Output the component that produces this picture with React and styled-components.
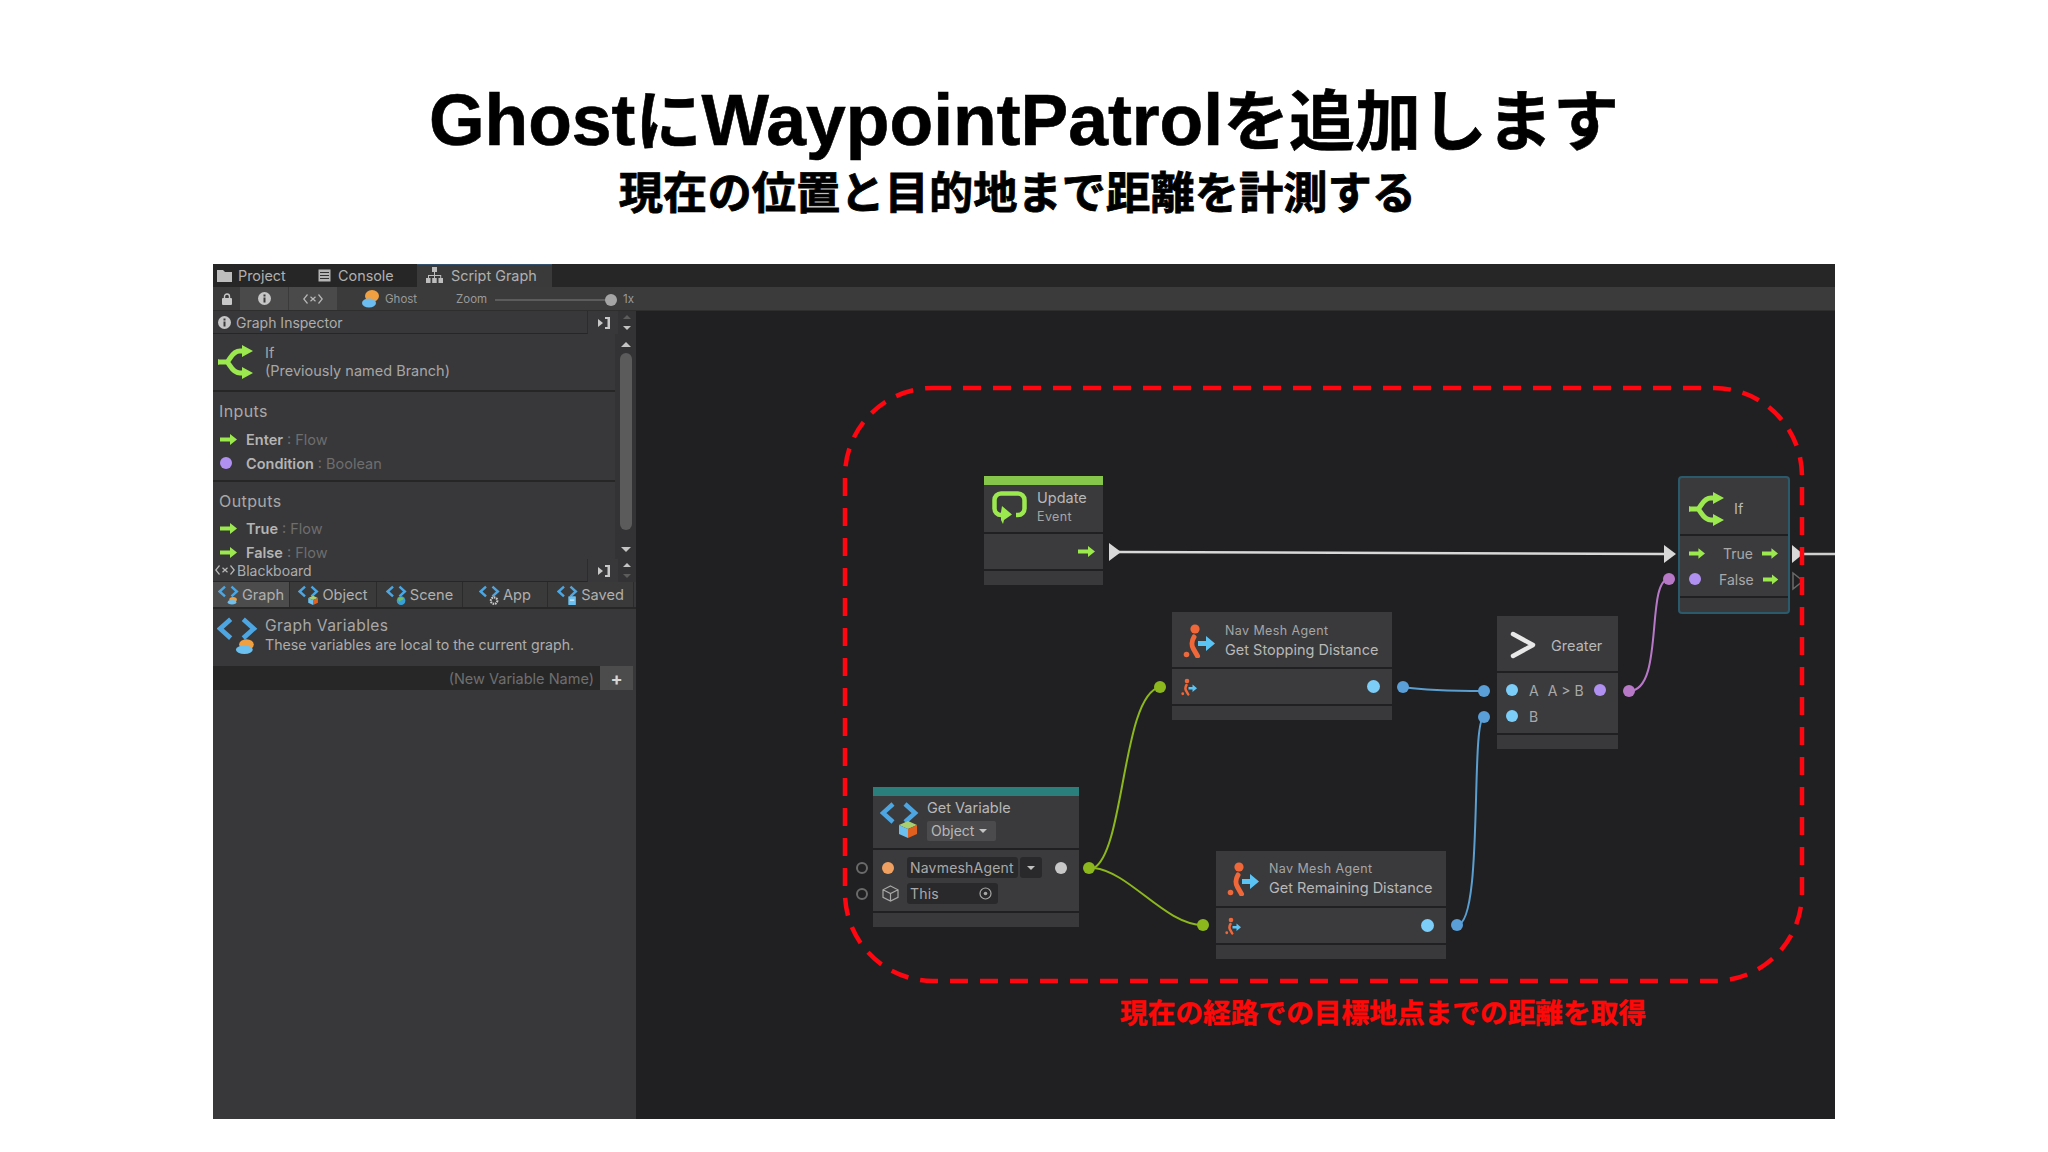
import React from 'react';
import styled, { createGlobalStyle } from 'styled-components';

// page position of the graph canvas, nodes are given in page pixels
const CX = 636;
const CY = 311;

const GREEN = '#9be84f';

const GlobalStyle = createGlobalStyle`
	html, body {
		margin: 0;
		padding: 0;
		background: #fff;
	}
	* {
		box-sizing: border-box;
	}
`;

const Page = styled.div`
	width: 2048px;
	height: 1152px;
	background: #fff;
	overflow: hidden;
	display: flex;
	flex-direction: column;
	font-family: Inter, 'Noto Sans CJK JP', sans-serif;
`;

const Heading = styled.header`
	height: 264px;
	padding-top: 79px;
	display: flex;
	flex-direction: column;
	align-items: center;
	color: #000;
	font-family: 'Liberation Sans', 'Noto Sans CJK JP', sans-serif;
	font-weight: 700;
`;

const Title = styled.h1`
	margin: 0;
	font-size: 71.5px;
	line-height: 82px;
	font-weight: 700;
	white-space: nowrap;
	-webkit-text-stroke: 0.6px #000;
`;

const TitleKana = styled.span`
	font-size: 66px;
`;

const Subtitle = styled.h2`
	margin: 3px 13px 0 0;
	font-size: 44.3px;
	line-height: 56px;
	font-weight: 700;
	white-space: nowrap;
	-webkit-text-stroke: 0.8px #000;
`;

const Shot = styled.section`
	width: 1622px;
	height: 855px;
	margin-left: 213px;
	display: flex;
	flex-direction: column;
	background: #38383a;
	color: #a8a8a8;
`;

const TabBar = styled.div`
	height: 23px;
	display: flex;
	background: #262626;
	font-size: 14.4px;
`;

const Tab = styled.div`
	width: ${p => p.$w}px;
	display: flex;
	align-items: center;
	gap: ${p => p.$gap || 6}px;
	padding-left: ${p => p.$pad}px;
	padding-bottom: 1px;
	background: ${p => (p.$active ? '#3a3a3a' : 'transparent')};
	border-top: 1px solid ${p => (p.$active ? '#35506a' : 'transparent')};
	color: #b0b0b0;
`;

const ToolBar = styled.div`
	height: 24px;
	display: flex;
	align-items: center;
	background: #3b3b3b;
	border-bottom: 1px solid #2e2e2e;
	font-size: 11.5px;
	color: #9a9a9a;
`;

const ToolButton = styled.div`
	width: 48px;
	height: 100%;
	margin-right: 1px;
	display: flex;
	align-items: center;
	justify-content: center;
	background: #4a4a4a;
`;

const LockSlot = styled.div`
	width: 27px;
	display: flex;
	justify-content: center;
`;

const GhostLabel = styled.div`
	width: 94px;
	margin-left: 24px;
	display: flex;
	align-items: center;
	gap: 5px;
`;

const ZoomTrack = styled.div`
	position: relative;
	width: 116px;
	height: 2px;
	margin: 2px 12px 0 8px;
	background: #5c5c5c;
`;

const ZoomKnob = styled.div`
	position: absolute;
	right: -6px;
	top: -5px;
	width: 12px;
	height: 12px;
	border-radius: 50%;
	background: #a5a5a5;
`;

const Work = styled.div`
	flex: 1;
	display: flex;
	min-height: 0;
`;

const Sidebar = styled.aside`
	width: 423px;
	display: flex;
	flex-direction: column;
	background: #38383a;
`;

const PaneHead = styled.div`
	height: ${p => p.$h}px;
	flex: none;
	display: flex;
	align-items: center;
	font-size: 14px;
	color: #adadad;
`;

const PaneTitle = styled.div`
	width: 375px;
	height: 100%;
	display: flex;
	align-items: center;
	gap: ${p => p.$gap || 5}px;
	padding-left: ${p => p.$pad}px;
	border-bottom: 1px solid #262626;
	border-right: 1px solid #2c2c2c;
`;

const PaneDock = styled.div`
	width: 30px;
	display: flex;
	justify-content: center;
`;

const MiniScroll = styled.div`
	width: 18px;
	height: 100%;
	display: flex;
	flex-direction: column;
	align-items: center;
	justify-content: space-around;
	background: #333335;
`;

const Caret = styled.span`
	width: 0;
	height: 0;
	border-left: ${p => p.$s || 4}px solid transparent;
	border-right: ${p => p.$s || 4}px solid transparent;
	${p => (p.$up ? 'border-bottom' : 'border-top')}: ${p => p.$s || 4}px solid ${p => p.$c || '#c4c4c4'};
`;

const InspectorBody = styled.div`
	height: 225px;
	flex: none;
	display: flex;
	overflow: hidden;
`;

const InspectorList = styled.div`
	width: 402px;
	display: flex;
	flex-direction: column;
`;

const UnitInfo = styled.div`
	height: 58px;
	flex: none;
	display: flex;
	align-items: center;
	gap: 12px;
	padding-left: 5px;
	border-bottom: 2px solid #262626;
	font-size: 14.5px;
	line-height: 18px;
	color: #a6a6a6;
`;

const PortGroup = styled.div`
	height: ${p => p.$h}px;
	flex: none;
	padding: 9px 0 0 6px;
	border-bottom: ${p => (p.$line ? '2px solid #262626' : 'none')};
`;

const GroupTitle = styled.div`
	height: 20px;
	font-size: 16px;
	line-height: 20px;
	letter-spacing: 0.4px;
	color: #a8a8a8;
`;

const PortRow = styled.div`
	height: 24px;
	display: flex;
	align-items: center;
	margin-top: ${p => p.$mt || 0}px;
	font-size: 14.5px;
	color: #6e6e6e;
`;

const PortIcon = styled.div`
	width: 27px;
	padding-left: 1px;
	display: flex;
	align-items: center;
`;

const PortName = styled.b`
	margin-right: 4px;
	font-weight: 600;
	color: #b4b4b4;
`;

const Scroller = styled.div`
	width: 21px;
	display: flex;
	flex-direction: column;
	align-items: center;
	padding: 8px 0 7px;
	background: #333335;
`;

const ScrollThumb = styled.div`
	width: 12px;
	flex: 1;
	margin: 6px 0 17px;
	border-radius: 6px;
	background: #5b5b5b;
`;

const Tabs = styled.div`
	height: 27px;
	flex: none;
	display: flex;
	border-bottom: 2px solid #272727;
`;

const ScopeTab = styled.div`
	width: ${p => p.$w}px;
	display: flex;
	align-items: center;
	justify-content: center;
	gap: 3px;
	padding-top: 1px;
	font-size: 14.6px;
	color: #b0b0b0;
	background: ${p => (p.$active ? '#4c4c4c' : '#3a3a3a')};
	border-right: 1px solid #2b2b2b;
`;

const VariablesInfo = styled.div`
	height: 57px;
	flex: none;
	display: flex;
	align-items: center;
	gap: 7px;
	padding: 0 0 5px 4px;
`;

const VariablesText = styled.div`
	display: flex;
	flex-direction: column;
	gap: 1px;
`;

const VariablesTitle = styled.div`
	font-size: 15.6px;
	line-height: 18px;
	letter-spacing: 0.4px;
	color: #a8a8a8;
`;

const VariablesNote = styled.div`
	font-size: 14.2px;
	line-height: 17px;
	color: #adadad;
`;

const NewVariable = styled.div`
	height: 24px;
	flex: none;
	display: flex;
`;

const NewVariableInput = styled.div`
	width: 387px;
	display: flex;
	align-items: center;
	justify-content: flex-end;
	padding-right: 6px;
	background: #272728;
	font-size: 14.5px;
	color: #6f6f6f;
`;

const AddButton = styled.div`
	width: 33px;
	display: flex;
	align-items: center;
	justify-content: center;
	background: #4c4c4c;
	color: #d6d6d6;
	font-size: 18px;
	font-weight: 700;
`;

const Canvas = styled.main`
	position: relative;
	flex: 1;
	overflow: hidden;
	background: #202022;
`;

const Overlay = styled.svg`
	position: absolute;
	left: 0;
	top: 0;
`;

const Node = styled.div`
	position: absolute;
	left: ${p => p.$x - CX}px;
	top: ${p => p.$y - CY}px;
	width: ${p => p.$w}px;
	display: flex;
	flex-direction: column;
	gap: 2px;
	${p => p.$selected && 'outline: 2px solid #2b5a6c; outline-offset: 0; border-radius: 2px;'}
`;

const NodeTop = styled.div`
	display: flex;
	flex-direction: column;
`;

const NodeBar = styled.div`
	height: 9px;
	background: ${p => p.$c};
`;

const NodeHead = styled.div`
	height: ${p => p.$h}px;
	display: flex;
	align-items: center;
	gap: ${p => p.$gap || 8}px;
	padding: ${p => (p.$shift > 0 ? p.$shift : 0)}px 0 ${p => (p.$shift < 0 ? -p.$shift : 0)}px ${p => p.$pad || 8}px;
	background: #3a3a3c;
	color: #b8b8b8;
	font-size: 14.5px;
`;

const HeadText = styled.div`
	display: flex;
	flex-direction: column;
	gap: ${p => p.$gap || 2}px;
	line-height: 18px;
`;

const HeadSmall = styled.div`
	font-size: 12.5px;
	line-height: 16px;
	letter-spacing: 0.4px;
	color: #a6a6a6;
`;

const NodeBody = styled.div`
	height: ${p => p.$h}px;
	display: flex;
	flex-direction: column;
	justify-content: center;
	padding: 0 ${p => p.$r || 12}px 0 ${p => p.$l || 9}px;
	background: #3b3b3d;
	color: #a9a9a9;
	font-size: 14px;
`;

const NodeRow = styled.div`
	height: ${p => p.$h || 26}px;
	display: flex;
	align-items: center;
	justify-content: ${p => (p.$between ? 'space-between' : 'flex-start')};
	gap: ${p => p.$gap || 0}px;
	white-space: nowrap;
`;

const PortLetter = styled.span`
	margin-left: 11px;
`;

const Compare = styled.span`
	margin-left: 9px;
`;

const NodeFoot = styled.div`
	height: 14px;
	background: #39393b;
`;

const Dot = styled.span`
	flex: none;
	width: ${p => p.$s || 12}px;
	height: ${p => p.$s || 12}px;
	border-radius: 50%;
	background: ${p => p.$c};
`;

const Dropdown = styled.div`
	margin-top: 2px;
	width: 69px;
	height: 20px;
	display: flex;
	align-items: center;
	gap: 5px;
	padding-left: 4px;
	border-radius: 2px;
	background: #4b4b4d;
	font-size: 14px;
`;

const FieldGroup = styled.div`
	display: flex;
	gap: 2px;
	height: 21px;
	margin-left: ${p => p.$ml}px;
`;

const Field = styled.div`
	width: ${p => p.$w}px;
	display: flex;
	align-items: center;
	justify-content: ${p => (p.$center ? 'center' : 'space-between')};
	padding: 0 ${p => (p.$center ? 0 : 6)}px 0 ${p => (p.$center ? 0 : 3)}px;
	border-radius: 3px;
	background: #29292b;
	letter-spacing: 0.2px;
`;

const Spacer = styled.div`
	flex: 1;
`;

const Note = styled.div`
	position: absolute;
	left: ${1120 - CX}px;
	top: ${996 - CY}px;
	font-size: 27.7px;
	line-height: 36px;
	font-weight: 700;
	color: #ff0808;
	white-space: nowrap;
	font-family: 'Liberation Sans', 'Noto Sans CJK JP', sans-serif;
	-webkit-text-stroke: 0.4px #ff0808;
`;

const FlowArrow = ({ w = 17, h = 11 }) => (
	<svg width={w} height={h} viewBox="0 0 17 11">
		<path d="M0 3.400h10V0l7 5.500-7 5.500V7.600H0z" fill={GREEN} />
	</svg>
);

const BranchIcon = ({ w = 35, h = 34 }) => (
	<svg width={w} height={h} viewBox="0 0 35 34" fill="none">
		<path d="M2 17h6c4 0 5-11 14-11h6M8 17c4 0 5 11 14 11h6" stroke={GREEN} strokeWidth="5" strokeLinecap="round" />
		<path d="M24 0l11 6-11 6zM24 22l11 6-11 6zM0 14l6 3-6 3z" fill={GREEN} />
	</svg>
);

const UpdateIcon = () => (
	<svg width="35" height="33" viewBox="0 0 35 33" fill="none">
		<path d="M11 24H9a6.500 6.500 0 0 1-6.500-6.500V9A6.500 6.500 0 0 1 9 2.500h17A6.500 6.500 0 0 1 32.500 9v8.500A6.500 6.500 0 0 1 26 24h-2" stroke={GREEN} strokeWidth="4.500" />
		<path d="M10 15l10 8.500-8 5.500-1 4-2-4v-8z" fill={GREEN} />
	</svg>
);

const GreaterIcon = () => (
	<svg width="26" height="28" viewBox="0 0 26 28" fill="none">
		<path d="M3 3l20 11L3 25" stroke="#e8e8e8" strokeWidth="4.500" strokeLinecap="round" strokeLinejoin="round" />
	</svg>
);

const RunnerIcon = ({ w = 32, h = 34 }) => (
	<svg width={w} height={h} viewBox="0 0 32 34" fill="none">
		<circle cx="12" cy="5" r="4.600" fill="#f0683a" />
		<path d="M11 13c-2.500 4-2.500 9-.5 12l4 7" stroke="#f0683a" strokeWidth="5" strokeLinecap="round" />
		<circle cx="3.500" cy="30.500" r="2.800" fill="#f0683a" />
		<path d="M15 17h8v-5l9 7.500-9 7.500v-5h-8z" fill="#5cc4f5" />
	</svg>
);

const badges = {
	graph: (
		<g>
			<ellipse cx="28" cy="27" rx="7" ry="5" fill="#f0a040" />
			<ellipse cx="26" cy="32" rx="8" ry="4" fill="#6cc0f0" />
		</g>
	),
	object: (
		<g>
			<path d="M28 20l9 4-9 4-9-4z" fill="#a8d070" />
			<path d="M19 24l9 4v9l-9-4z" fill="#6cc0f0" />
			<path d="M37 24l-9 4v9l9-4z" fill="#e06020" />
		</g>
	),
	scene: (
		<g>
			<circle cx="28" cy="29" r="8" fill="#38a0d8" />
			<path d="M22 25c4-3 8-3 11 0-1 4-6 2-7 6-2 0-3-3-4-6z" fill="#70c060" />
		</g>
	),
	app: (
		<g>
			<circle cx="28" cy="29" r="6" fill="none" stroke="#c8c8c8" strokeWidth="4" strokeDasharray="3 1.500" />
		</g>
	),
	saved: (
		<g>
			<rect x="21" y="21" width="14" height="16" rx="1" fill="#6cc0f0" />
			<rect x="24" y="27" width="8" height="2" fill="#e8f4fc" />
		</g>
	)
};

const CodeIcon = ({ w = 39, h = 37, badge = 'graph' }) => (
	<svg width={w} height={h} viewBox="0 0 39 37" fill="none">
		<path d="M13 3L3 12l10 9" stroke="#4da6e2" strokeWidth="4.500" />
		<path d="M25 3l10 9-10 9" stroke="#4da6e2" strokeWidth="4.500" />
		{badges[badge]}
	</svg>
);

const FolderIcon = () => (
	<svg width="15" height="13" viewBox="0 0 15 13">
		<path d="M0 1h6l2 2h7v10H0z" fill="#bdbdbd" />
	</svg>
);

const ConsoleIcon = () => (
	<svg width="13" height="13" viewBox="0 0 13 13" fill="none">
		<rect x="0.500" y="0.500" width="12" height="12" fill="#b5b5b5" />
		<path d="M2 3.500h9M2 6.500h9M2 9.500h9" stroke="#333" strokeWidth="1" />
	</svg>
);

const TreeIcon = () => (
	<svg width="17" height="17" viewBox="0 0 17 17" fill="#bdbdbd">
		<rect x="6" y="0" width="5" height="5" />
		<rect x="0" y="11" width="4.500" height="5" />
		<rect x="6.200" y="11" width="4.500" height="5" />
		<rect x="12.500" y="11" width="4.500" height="5" />
		<path d="M8 5h1v3h6.200v3h-1V9H9v2H8V9H3v2H2V8h6z" />
	</svg>
);

const LockIcon = () => (
	<svg width="10" height="12" viewBox="0 0 10 12" fill="none">
		<path d="M2.500 5V3.500a2.500 2.500 0 0 1 5 0V5" stroke="#c8c8c8" strokeWidth="1.400" />
		<rect y="5" width="10" height="7" rx="1" fill="#c8c8c8" />
	</svg>
);

const InfoIcon = ({ s = 13 }) => (
	<svg width={s} height={s} viewBox="0 0 13 13">
		<circle cx="6.500" cy="6.500" r="6.500" fill="#c6c6c6" />
		<rect x="5.500" y="5.500" width="2" height="5" fill="#3a3a3a" />
		<rect x="5.500" y="2.500" width="2" height="2" fill="#3a3a3a" />
	</svg>
);

const VarIcon = ({ c = '#b8b8b8' }) => (
	<svg width="20" height="12" viewBox="0 0 20 12" fill="none" stroke={c} strokeWidth="1.200">
		<path d="M4.500 1.500L.8 6l3.700 4.500M15.500 1.500L19.200 6l-3.700 4.500M7.500 3.800l5 4.400M12.500 3.800l-5 4.400" />
	</svg>
);

const GhostIcon = () => (
	<svg width="18" height="18" viewBox="0 0 18 18">
		<ellipse cx="10" cy="6" rx="7" ry="6" fill="#f0a040" />
		<ellipse cx="7" cy="13" rx="7" ry="4.500" fill="#6cbcf0" />
	</svg>
);

const DockIcon = () => (
	<svg width="13" height="12" viewBox="0 0 13 12" fill="#c8c8c8">
		<path d="M1 2l5 4-5 4z" />
		<path d="M8 0h5v12H8v-2h2.500V2H8z" />
	</svg>
);

const CubeIcon = () => (
	<svg width="17" height="17" viewBox="0 0 17 17" fill="none" stroke="#a8a8a8" strokeWidth="1.200">
		<path d="M8.500 1L16 4.800v7.600L8.500 16 1 12.400V4.800zM1 4.800l7.500 3.700L16 4.800M8.500 8.500V16" />
	</svg>
);

const TargetIcon = () => (
	<svg width="13" height="13" viewBox="0 0 13 13" fill="none">
		<circle cx="6.500" cy="6.500" r="5.500" stroke="#a8a8a8" strokeWidth="1.200" />
		<circle cx="6.500" cy="6.500" r="1.800" fill="#a8a8a8" />
	</svg>
);

const Edges = () => (
	<Overlay width="1199" height="808" viewBox={`${CX} ${CY} 1199 808`} fill="none">
		<path d="M1118 552L1665 554" stroke="#d8d8d8" strokeWidth="2.500" />
		<path d="M1798 554H1835" stroke="#d0d0d0" strokeWidth="2.500" />
		<path d="M1109 543l12 9-12 9z" fill="#d8d8d8" />
		<path d="M1664 545l12 9-12 9z" fill="#d8d8d8" />
		<path d="M1792 545l11 9-11 9z" fill="#d8d8d8" />
		<path d="M1793 573l10 8-10 8z" stroke="#6a6a6a" strokeWidth="1.500" />

		<path d="M1094 868C1125 850 1122 695 1160 687" stroke="#8cb81e" strokeWidth="2" />
		<path d="M1094 868C1130 872 1165 925 1203 925" stroke="#8cb81e" strokeWidth="2" />
		<path d="M1403 687C1430 691 1460 691 1484 691" stroke="#5a9fd0" strokeWidth="2" />
		<path d="M1457 925C1484 925 1470 720 1484 717" stroke="#5a9fd0" strokeWidth="2" />
		<path d="M1629 691C1665 691 1645 580 1669 579" stroke="#b878c8" strokeWidth="2" />

		<circle cx="1089" cy="868" r="6" fill="#8cb81e" />
		<circle cx="1160" cy="687" r="6" fill="#8cb81e" />
		<circle cx="1203" cy="925" r="6" fill="#8cb81e" />
		<circle cx="1403" cy="687" r="6" fill="#5a9fd8" />
		<circle cx="1484" cy="691" r="6" fill="#5a9fd8" />
		<circle cx="1484" cy="717" r="6" fill="#5a9fd8" />
		<circle cx="1457" cy="925" r="6" fill="#5a9fd8" />
		<circle cx="1629" cy="691" r="6" fill="#b878c8" />
		<circle cx="1669" cy="579" r="6" fill="#b878c8" />
		<circle cx="862" cy="868" r="5" stroke="#6a6a6a" strokeWidth="2" />
		<circle cx="862" cy="894" r="5" stroke="#6a6a6a" strokeWidth="2" />

		<rect x="845" y="388" width="957" height="593" rx="88" stroke="#ff0610" strokeWidth="4.500" strokeDasharray="18 12" />
	</Overlay>
);

const scopes = [
	{ name: 'Graph', badge: 'graph', w: 77, active: true },
	{ name: 'Object', badge: 'object', w: 87 },
	{ name: 'Scene', badge: 'scene', w: 86 },
	{ name: 'App', badge: 'app', w: 85 },
	{ name: 'Saved', badge: 'saved', w: 86 }
];

class App extends React.Component {
	render() {
		return (
			<Page>
				<GlobalStyle />
				<Heading>
					<Title>Ghost<TitleKana>に</TitleKana>WaypointPatrol<TitleKana>を追加します</TitleKana></Title>
					<Subtitle>現在の位置と目的地まで距離を計測する</Subtitle>
				</Heading>
				<Shot>
					<TabBar>
						<Tab $w={103} $pad={4}><FolderIcon />Project</Tab>
						<Tab $w={101} $pad={2} $gap={7}><ConsoleIcon />Console</Tab>
						<Tab $w={135} $pad={9} $gap={8} $active><TreeIcon />Script Graph</Tab>
					</TabBar>
					<ToolBar>
						<LockSlot><LockIcon /></LockSlot>
						<ToolButton><InfoIcon /></ToolButton>
						<ToolButton><VarIcon /></ToolButton>
						<GhostLabel><GhostIcon />Ghost</GhostLabel>
						Zoom
						<ZoomTrack><ZoomKnob /></ZoomTrack>
						1x
					</ToolBar>
					<Work>
						<Sidebar>
							<PaneHead $h={23}>
								<PaneTitle $pad={5}><InfoIcon />Graph Inspector</PaneTitle>
								<PaneDock><DockIcon /></PaneDock>
								<MiniScroll><Caret $up $c="#5c5c5c" /><Caret /></MiniScroll>
							</PaneHead>
							<InspectorBody>
								<InspectorList>
									<UnitInfo>
										<BranchIcon />
										<div>If<br />(Previously named Branch)</div>
									</UnitInfo>
									<PortGroup $h={90} $line>
										<GroupTitle>Inputs</GroupTitle>
										<PortRow $mt={6}>
											<PortIcon><FlowArrow /></PortIcon>
											<PortName>Enter</PortName>: Flow
										</PortRow>
										<PortRow>
											<PortIcon><Dot $c="#b090f0" /></PortIcon>
											<PortName>Condition</PortName>: Boolean
										</PortRow>
									</PortGroup>
									<PortGroup $h={77}>
										<GroupTitle>Outputs</GroupTitle>
										<PortRow $mt={5}>
											<PortIcon><FlowArrow /></PortIcon>
											<PortName>True</PortName>: Flow
										</PortRow>
										<PortRow>
											<PortIcon><FlowArrow /></PortIcon>
											<PortName>False</PortName>: Flow
										</PortRow>
									</PortGroup>
								</InspectorList>
								<Scroller>
									<Caret $up $s={5} />
									<ScrollThumb />
									<Caret $s={5} />
								</Scroller>
							</InspectorBody>
							<PaneHead $h={23}>
								<PaneTitle $pad={2} $gap={2}><VarIcon />Blackboard</PaneTitle>
								<PaneDock><DockIcon /></PaneDock>
								<MiniScroll><Caret $up /><Caret $c="#5c5c5c" /></MiniScroll>
							</PaneHead>
							<Tabs>
								{scopes.map(s => (
									<ScopeTab key={s.name} $w={s.w} $active={s.active}>
										<CodeIcon w={21} h={20} badge={s.badge} />
										{s.name}
									</ScopeTab>
								))}
							</Tabs>
							<VariablesInfo>
								<CodeIcon w={41} h={39} />
								<VariablesText>
									<VariablesTitle>Graph Variables</VariablesTitle>
									<VariablesNote>These variables are local to the current graph.</VariablesNote>
								</VariablesText>
							</VariablesInfo>
							<NewVariable>
								<NewVariableInput>(New Variable Name)</NewVariableInput>
								<AddButton>+</AddButton>
							</NewVariable>
						</Sidebar>
						<Canvas>
							<Node $x={984} $y={476} $w={119}>
								<NodeTop>
									<NodeBar $c="#86c64a" />
									<NodeHead $h={47} $gap={10} $shift={-3}>
										<UpdateIcon />
										<HeadText>
											Update
											<HeadSmall>Event</HeadSmall>
										</HeadText>
									</NodeHead>
								</NodeTop>
								<NodeBody $h={35} $r={8}>
									<NodeRow $between><Spacer /><FlowArrow /></NodeRow>
								</NodeBody>
								<NodeFoot />
							</Node>

							<Node $x={1172} $y={612} $w={220}>
								<NodeHead $h={55} $pad={11} $gap={10} $shift={2}>
									<RunnerIcon />
									<HeadText>
										<HeadSmall>Nav Mesh Agent</HeadSmall>
										Get Stopping Distance
									</HeadText>
								</NodeHead>
								<NodeBody $h={35}>
									<NodeRow $between><RunnerIcon w={16} h={18} /><Dot $s={13} $c="#7ccdf8" /></NodeRow>
								</NodeBody>
								<NodeFoot />
							</Node>

							<Node $x={1216} $y={851} $w={230}>
								<NodeHead $h={55} $pad={11} $gap={10}>
									<RunnerIcon />
									<HeadText>
										<HeadSmall>Nav Mesh Agent</HeadSmall>
										Get Remaining Distance
									</HeadText>
								</NodeHead>
								<NodeBody $h={35}>
									<NodeRow $between><RunnerIcon w={16} h={18} /><Dot $s={13} $c="#7ccdf8" /></NodeRow>
								</NodeBody>
								<NodeFoot />
							</Node>

							<Node $x={1497} $y={616} $w={121}>
								<NodeHead $h={55} $pad={13} $gap={15} $shift={3}>
									<GreaterIcon />
									Greater
								</NodeHead>
								<NodeBody $h={60} $r={12} $l={9}>
									<NodeRow><Dot $c="#7ccdf8" /><PortLetter>A</PortLetter><Compare>A &gt; B</Compare><Spacer /><Dot $c="#b090f0" /></NodeRow>
									<NodeRow><Dot $c="#7ccdf8" /><PortLetter>B</PortLetter></NodeRow>
								</NodeBody>
								<NodeFoot />
							</Node>

							<Node $x={1680} $y={478} $w={108} $selected>
								<NodeHead $h={56} $pad={9} $gap={10} $shift={5}>
									<BranchIcon />
									If
								</NodeHead>
								<NodeBody $h={60} $l={9} $r={10}>
									<NodeRow $gap={9}><FlowArrow /><Spacer />True<FlowArrow /></NodeRow>
									<NodeRow $gap={9}><Dot $c="#b090f0" /><Spacer />False<FlowArrow /></NodeRow>
								</NodeBody>
								<NodeFoot />
							</Node>

							<Node $x={873} $y={787} $w={206}>
								<NodeTop>
									<NodeBar $c="#2a7f7c" />
									<NodeHead $h={52} $pad={7} $gap={8} $shift={-5}>
										<CodeIcon badge="object" />
										<HeadText $gap={0}>
											Get Variable
											<Dropdown>Object<Caret /></Dropdown>
										</HeadText>
									</NodeHead>
								</NodeTop>
								<NodeBody $h={61} $l={9} $r={12}>
									<NodeRow>
										<Dot $c="#f0a060" />
										<FieldGroup $ml={13}>
											<Field $w={111}>NavmeshAgent</Field>
											<Field $w={22} $center><Caret $c="#c0c0c0" /></Field>
										</FieldGroup>
										<Spacer />
										<Dot $c="#c8c8c8" />
									</NodeRow>
									<NodeRow>
										<CubeIcon />
										<FieldGroup $ml={8}>
											<Field $w={91}>This<TargetIcon /></Field>
										</FieldGroup>
									</NodeRow>
								</NodeBody>
								<NodeFoot />
							</Node>

							<Edges />
							<Note>現在の経路での目標地点までの距離を取得</Note>
						</Canvas>
					</Work>
				</Shot>
			</Page>
		);
	}
}

export default App;
